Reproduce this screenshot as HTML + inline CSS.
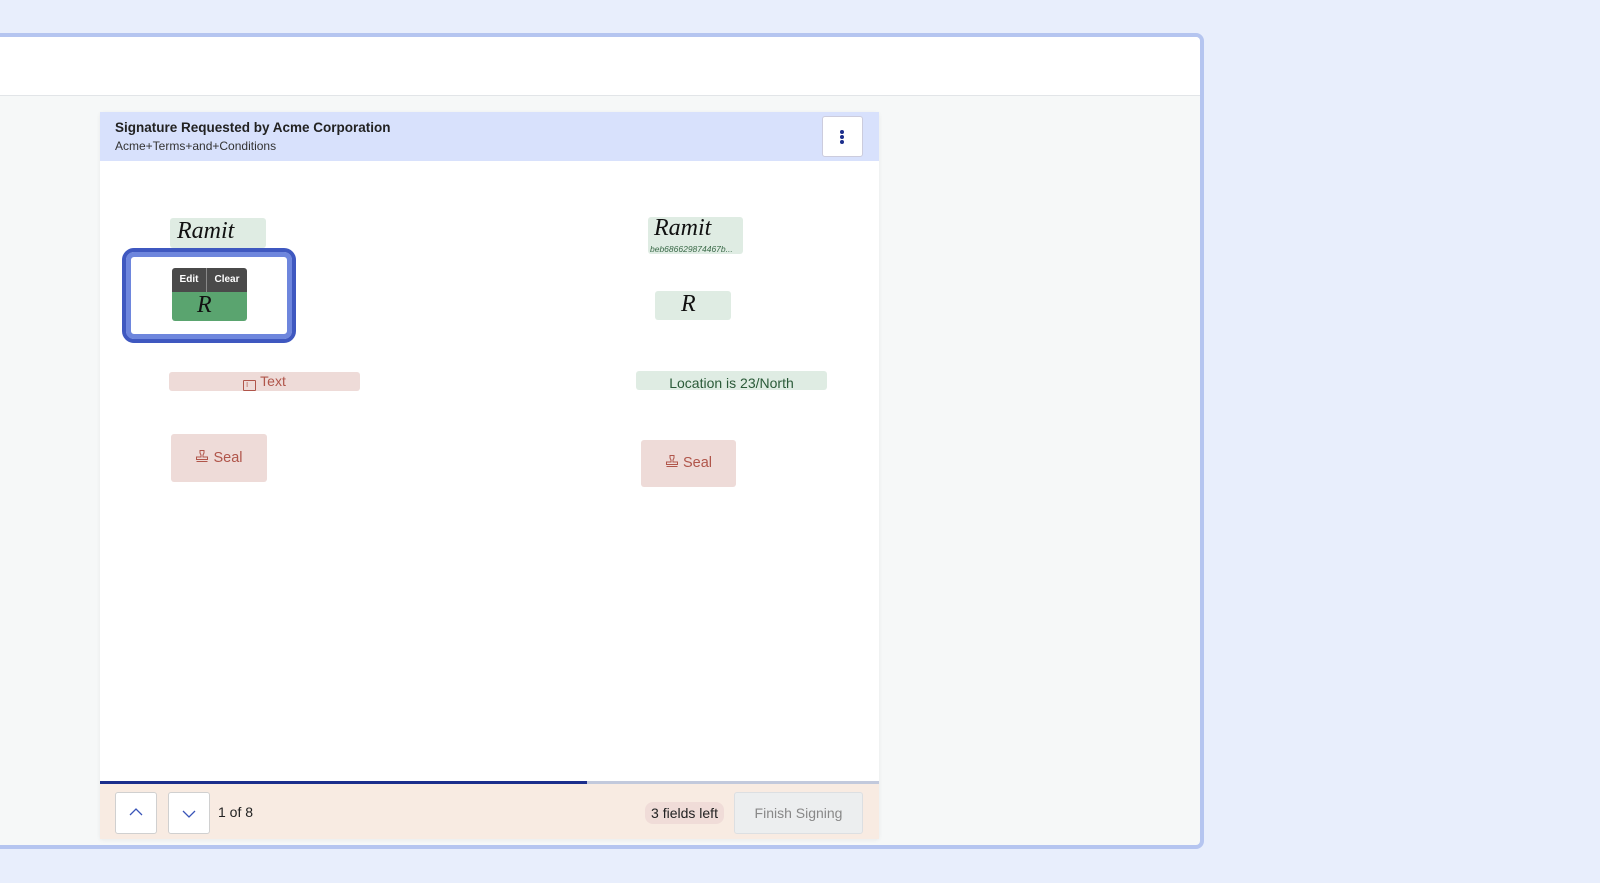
<!DOCTYPE html>
<html><head><meta charset="utf-8"><style>
*{margin:0;padding:0;box-sizing:border-box}
body{width:1600px;height:883px;background:#e8eefc;position:relative;overflow:hidden;font-family:"Liberation Sans",sans-serif}
.abs{position:absolute}
.frame{left:-10px;top:33px;width:1214px;height:816px;border:4px solid #b5c5f0;border-radius:8px;background:#f6f8f8;overflow:hidden}
.top{left:0;top:0;width:100%;height:59px;background:#fff;border-bottom:1px solid #e2e5e8}
.sig{font-family:"Liberation Serif",serif;font-style:italic;color:#111}
</style></head><body>
<div class="abs frame">
  <div class="abs top"></div>
</div>
<div class="abs" style="left:100px;top:112px;width:779px;height:727px;background:#fff;box-shadow:0 1px 4px rgba(0,0,0,0.06)"></div>
<div class="abs" style="left:100px;top:112px;width:779px;height:49px;background:#d8e1fc"></div>
<div class="abs" style="left:115px;top:120px;font-size:13.5px;font-weight:bold;color:#222">Signature Requested by Acme Corporation</div>
<div class="abs" style="left:115px;top:139px;font-size:12px;color:#333">Acme+Terms+and+Conditions</div>
<div class="abs" style="left:822px;top:116px;width:41px;height:41px;background:#fff;border:1px solid #ccd;border-radius:3px"></div>
<div class="abs" style="left:840px;top:130px;width:4px;height:4px;border-radius:2px;background:#1b2e8c;box-shadow:0 5px 0 #1b2e8c,0 10px 0 #1b2e8c"></div>

<div class="abs" style="left:170px;top:218px;width:96px;height:30px;background:#dfece3;border-radius:3px"></div>
<div class="abs sig" style="left:177px;top:218px;font-size:24px">Ramit</div>
<div class="abs" style="left:122px;top:248px;width:174px;height:95px;border:4px solid #3f58c0;border-radius:12px;box-shadow:inset 0 0 0 5px #6e86dd"></div>
<div class="abs" style="left:172px;top:268px;width:75px;height:24px;background:#4a4a4a;border-radius:3px 3px 0 0;color:#fff;font-size:10px;font-weight:bold;display:flex">
 <div style="width:35px;text-align:center;line-height:24px;border-right:1px solid #888">Edit</div><div style="flex:1;text-align:center;line-height:24px">Clear</div></div>
<div class="abs" style="left:172px;top:292px;width:75px;height:29px;background:#5aa46f;border-radius:0 0 3px 3px"></div>
<div class="abs sig" style="left:197px;top:292px;font-size:24px">R</div>

<div class="abs" style="left:169px;top:372px;width:191px;height:19px;background:#eedbd8;border-radius:3px;color:#b0554a;font-size:14px;text-align:center;line-height:19px"><span style="display:inline-block;width:13px;height:11px;border:1px solid #b0554a;border-radius:1px;vertical-align:-1px;margin-right:4px;font-size:7px;line-height:9px;text-align:left;padding-left:2px">I</span>Text</div>
<div class="abs" style="left:171px;top:434px;width:96px;height:48px;background:#eedbd8;border-radius:3px;color:#b0554a;font-size:14.5px;text-align:center;line-height:48px"><svg width="14" height="14" viewBox="0 0 14 14" style="vertical-align:-1px"><path d="M5 1.5h4v2.5l-1 2v2h4.5v2.5h-11v-2.5h4.5v-2l-1-2z M1.5 12.5h11" fill="none" stroke="#b0554a" stroke-width="1"/></svg> Seal</div>

<div class="abs" style="left:648px;top:217px;width:95px;height:37px;background:#dfece3;border-radius:3px"></div>
<div class="abs sig" style="left:654px;top:215px;font-size:24px">Ramit</div>
<div class="abs" style="left:650px;top:244px;font-size:8.5px;font-style:italic;color:#3a6a48">beb686629874467b...</div>
<div class="abs" style="left:655px;top:291px;width:76px;height:29px;background:#dfece3;border-radius:3px"></div>
<div class="abs sig" style="left:681px;top:291px;font-size:24px">R</div>
<div class="abs" style="left:636px;top:371px;width:191px;height:19px;background:#dfece3;border-radius:3px;color:#2a5a38;font-size:14px;text-align:center;line-height:24px;overflow:hidden">Location is 23/North</div>
<div class="abs" style="left:641px;top:440px;width:95px;height:47px;background:#eedbd8;border-radius:3px;color:#b0554a;font-size:14.5px;text-align:center;line-height:47px"><svg width="14" height="14" viewBox="0 0 14 14" style="vertical-align:-1px"><path d="M5 1.5h4v2.5l-1 2v2h4.5v2.5h-11v-2.5h4.5v-2l-1-2z M1.5 12.5h11" fill="none" stroke="#b0554a" stroke-width="1"/></svg> Seal</div>

<div class="abs" style="left:100px;top:781px;width:779px;height:3px;background:#c2c9dc"></div>
<div class="abs" style="left:100px;top:781px;width:487px;height:3px;background:#1b2e8c"></div>
<div class="abs" style="left:100px;top:784px;width:779px;height:55px;background:#f8ebe2"></div>
<div class="abs" style="left:115px;top:792px;width:42px;height:42px;background:#fff;border:1px solid #d0d0d0;border-radius:3px"></div>
<svg class="abs" style="left:129px;top:806px" width="14" height="12"><path d="M1 9 L7 3 L13 9" fill="none" stroke="#3a55b8" stroke-width="1.3"/></svg>
<div class="abs" style="left:168px;top:792px;width:42px;height:42px;background:#fff;border:1px solid #d0d0d0;border-radius:3px"></div>
<svg class="abs" style="left:182px;top:808px" width="14" height="12"><path d="M1 3 L7 9 L13 3" fill="none" stroke="#3a55b8" stroke-width="1.3"/></svg>
<div class="abs" style="left:218px;top:804px;font-size:14px;color:#222">1 of 8</div>
<div class="abs" style="left:645px;top:802px;width:79px;height:22px;background:#f0dcd8;border-radius:8px;font-size:14px;color:#222;text-align:center;line-height:22px">3 fields left</div>
<div class="abs" style="left:734px;top:792px;width:129px;height:42px;background:#eceeef;border:1px solid #dcdfe2;border-radius:3px;font-size:14px;color:#888;text-align:center;line-height:40px">Finish Signing</div>
</body></html>
